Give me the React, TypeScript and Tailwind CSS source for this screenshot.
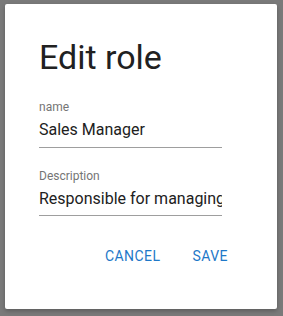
export default function App() {
  return (
    <div
      className="w-[283px] h-[316px] bg-[#7a7a7a] pl-[5px] pt-[4px]"
      style={{ fontFamily: "Roboto, 'Liberation Sans', sans-serif" }}
    >
      <div className="w-[272px] h-[305px] bg-white rounded-[2px] shadow-[0_2px_4px_rgba(0,0,0,0.25)] flex flex-col">
        <div className="pl-[34px] pt-[33px]">
          <h2 className="text-[34px] leading-[40px] text-[#212121] font-normal">Edit role</h2>
          <div className="mt-[22px] w-[183px]">
            <div className="text-[12px] leading-[16px] text-[#757575]">name</div>
            <div className="mt-[3px] text-[16px] leading-[24px] text-[#212121] pb-[5px] border-b border-[#9e9e9e] whitespace-nowrap overflow-hidden">
              Sales Manager
            </div>
          </div>
          <div className="mt-[20px] w-[183px]">
            <div className="text-[12px] leading-[16px] text-[#757575]">Description</div>
            <div className="mt-[3px] text-[16px] leading-[24px] text-[#212121] pb-[4px] border-b border-[#9e9e9e] whitespace-nowrap overflow-hidden">
              Responsible for managing sales team
            </div>
          </div>
        </div>
        <div className="flex justify-end gap-[16px] pr-[41px] mt-[30px]">
          <button className="px-2 text-[14px] leading-[20px] font-normal tracking-[0.45px] text-[#1e78c8]">CANCEL</button>
          <button className="px-2 text-[14px] leading-[20px] font-normal tracking-[0.45px] text-[#1e78c8]">SAVE</button>
        </div>
      </div>
    </div>
  );
}
